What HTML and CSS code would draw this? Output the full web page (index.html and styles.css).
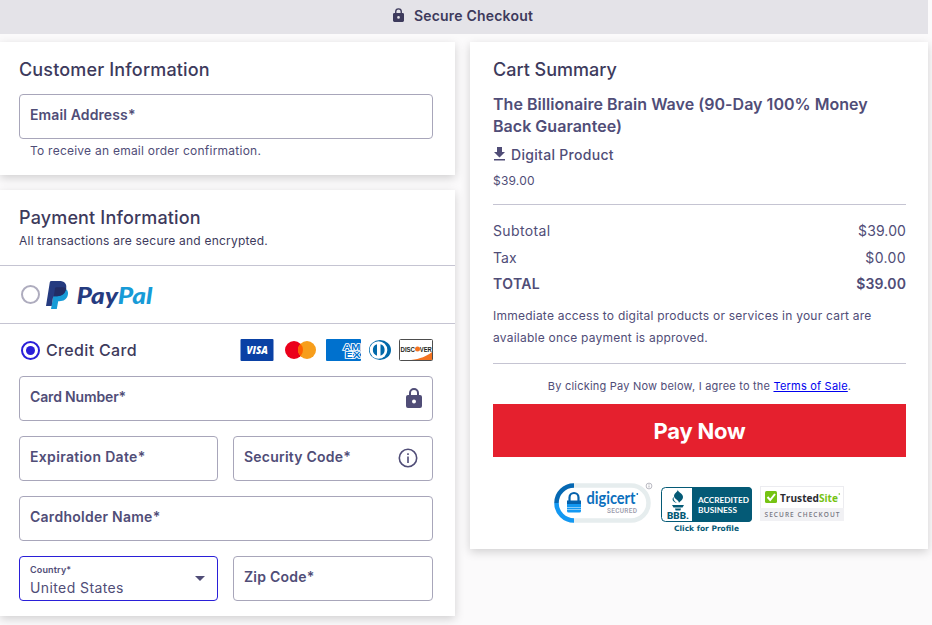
FILE: index.html
```html
<!DOCTYPE html>
<html lang="en">
<head>
<meta charset="utf-8">
<title>Secure Checkout</title>
<link rel="stylesheet" href="styles.css">
</head>
<body>
<header class="topbar">
  <svg class="topbar-lock" width="11" height="14" viewBox="0 0 16 20"><path fill="currentColor" fill-rule="evenodd" d="M2 7h1V5a5 5 0 0 1 10 0v2h1a2 2 0 0 1 2 2v9a2 2 0 0 1-2 2H2a2 2 0 0 1-2-2V9a2 2 0 0 1 2-2zm3 0h6V5a3 3 0 0 0-6 0zm3 4.500a2 2 0 1 0 0 4a2 2 0 0 0 0-4z"/></svg>
  <span class="topbar-title">Secure Checkout</span>
</header>
<main class="columns">
  <div class="left">
    <section class="card customer">
      <h2>Customer Information</h2>
      <div class="field email">Email Address*</div>
      <p class="help">To receive an email order confirmation.</p>
    </section>
    <section class="card payment">
      <div class="payment-head">
        <h2>Payment Information</h2>
        <p class="sub">All transactions are secure and encrypted.</p>
      </div>
      <div class="method paypal">
        <span class="radio"></span>
        <svg class="pp" width="108" height="29" viewBox="0 0 108 29">
          <path fill="#179bd7" d="M20 8c2 1.500 2.500 4 1.700 6.500-1.200 4-4 5.700-8.200 5.700h-1.300L10.800 28H5l3-17z"/>
          <path fill="#253b80" d="M3.800 1.300Q4 0 5.500 0H13c5.500 0 8 2.600 7.200 7.500-.9 5-4 7.700-9.200 7.700H8.500Q7.300 15.200 7 16.500L5.700 25H0z"/>
          <path fill="#222d65" d="M9 7.500Q9.200 6.300 10.500 6.300h6.200c1.400 0 2.600.3 3.500 1-.8 5-4 7.900-9.200 7.900H7.800z"/>
          <text class="pp-text" x="30.500" y="23" textLength="76" lengthAdjust="spacingAndGlyphs" fill="#253b80">Pay<tspan fill="#179bd7">Pal</tspan></text>
        </svg>
      </div>
      <div class="method credit">
        <span class="radio on"></span>
        <span class="credit-label">Credit Card</span>
        <svg class="brands" width="193" height="22" viewBox="0 0 193 22">
          <rect x=".5" width="33" height="22" rx="1" fill="#0a41a5"/>
          <text class="visa" x="6.500" y="15" textLength="21.500" lengthAdjust="spacingAndGlyphs" fill="#fff">VISA</text>
          <circle cx="54" cy="11" r="9" fill="#eb001b"/><circle cx="67" cy="11" r="9" fill="#f79e1b"/>
          <path fill="#ff5f00" d="M60.500 4.800a9 9 0 0 1 0 12.400a9 9 0 0 1 0-12.400z"/>
          <rect x="86" width="35" height="22" rx="1" fill="#0071ce"/>
          <g class="amex" fill="#0071ce" stroke="#fff" stroke-width="1.700" paint-order="stroke"><text x="103" y="10.500" textLength="17.500" lengthAdjust="spacingAndGlyphs">AM</text><text x="105" y="19" textLength="15.500" lengthAdjust="spacingAndGlyphs">EX</text></g>
          <ellipse cx="140" cy="11" rx="11" ry="10" fill="#0069aa"/><circle cx="138.500" cy="11" r="8.800" fill="#fff"/>
          <path fill="#0069aa" d="M137 5.300a6 6 0 0 0 0 11.400zM140.500 5.300a6 6 0 0 1 0 11.400z"/>
          <rect x="159.500" y=".5" width="33" height="21" rx="1" fill="#fff" stroke="#4d4d4d"/>
          <path fill="#f47321" d="M192 13v8h-21c9-1 16-4 21-8z"/>
          <g class="disc" fill="#231f20"><text x="160.500" y="12.500" textLength="14.500" lengthAdjust="spacingAndGlyphs">DISC</text><text x="179.800" y="12.500" textLength="12" lengthAdjust="spacingAndGlyphs">VER</text></g><circle cx="177.500" cy="10" r="2.500" fill="#f47321"/>
        </svg>
      </div>
      <div class="form">
        <div class="field wide card-number">Card Number*
          <svg class="lock" width="16" height="20" viewBox="0 0 16 20"><path fill="currentColor" fill-rule="evenodd" d="M2 7h1V5a5 5 0 0 1 10 0v2h1a2 2 0 0 1 2 2v9a2 2 0 0 1-2 2H2a2 2 0 0 1-2-2V9a2 2 0 0 1 2-2zm3 0h6V5a3 3 0 0 0-6 0zm3 4.500a2 2 0 1 0 0 4a2 2 0 0 0 0-4z"/></svg></div>
        <div class="field expiry">Expiration Date*</div>
        <div class="field">Security Code*
          <svg class="info" width="20" height="20" viewBox="0 0 20 20"><circle cx="10" cy="10" r="8.700" fill="none" stroke="currentColor" stroke-width="1.600"/><path fill="currentColor" d="M9.200 8.500h1.600V15H9.200zM9.200 5.200h1.600V7H9.200z"/></svg></div>
        <div class="field wide holder">Cardholder Name*</div>
        <div class="field select">
          <span class="stack"><span class="mini">Country*</span><span class="value">United States</span></span>
          <svg class="caret" width="10" height="5" viewBox="0 0 10 5"><path fill="currentColor" d="M0 0h10L5 5z"/></svg>
        </div>
        <div class="field">Zip Code*</div>
      </div>
    </section>
  </div>
  <section class="card cart">
    <h2 class="cart-title">Cart Summary</h2>
    <h3>The Billionaire Brain Wave (90-Day 100% Money<br>Back Guarantee)</h3>
    <div class="digital"><svg width="11" height="14" viewBox="0 0 11 14"><path fill="currentColor" d="M3 0h5v5h3L5.500 10.500 0 5h3zM0 12h11v1.600H0z"/></svg><span>Digital Product</span></div>
    <div class="price">$39.00</div>
    <div class="totals">
      <div class="row"><span class="name">Subtotal</span><span>$39.00</span></div>
      <div class="row"><span>Tax</span><span class="name">$0.00</span></div>
      <div class="row total"><span class="name">TOTAL</span><span>$39.00</span></div>
    </div>
    <p class="access">Immediate access to digital products or services in your cart are<br>available once payment is approved.</p>
    <p class="terms">By clicking Pay Now below, I agree to the <a href="#">Terms of Sale</a>.</p>
    <button class="pay">Pay Now</button>
    <div class="badges">
      <svg width="99" height="42" viewBox="0 0 99 42">
        <rect x="2.500" y="3.500" width="92" height="35" rx="17.500" fill="#fff" stroke="#e6edee" stroke-width="4.500"/>
        <path d="M20 3.500a17.500 17.500 0 0 0-17.500 17.500" fill="none" stroke="#0568b3" stroke-width="4.500"/>
        <path d="M2.500 21A17.500 17.500 0 0 0 20 38.500" fill="none" stroke="#1398f2" stroke-width="4.500"/>
        <path d="M15.500 20v-4.500a4.500 4.500 0 0 1 9 0V20" fill="none" stroke="#0561ac" stroke-width="2.200"/>
        <path fill="#0561ac" d="M13 18.500h14v5H13z"/><path fill="#1398f2" d="M13 22h14v3H13zM13 25.500h14v2H13zM13 28h14v1a1.500 1.500 0 0 1-1.500 1.500h-11A1.500 1.500 0 0 1 13 29z"/>
        <text class="digi" x="32.500" y="22" textLength="49" lengthAdjust="spacingAndGlyphs" fill="#0b6fbd">digicert</text>
        <circle cx="83.300" cy="12" r=".9" fill="#0b6fbd"/>
        <text class="secured" x="53" y="30.500" textLength="30" lengthAdjust="spacing" fill="#9a9aaa">SECURED</text>
        <circle cx="95" cy="4" r="2.900" fill="#fff" stroke="#8c8c99" stroke-width=".6"/><path d="M95 3.500v2M95 2.300v.7" stroke="#8c8c99" stroke-width=".7"/>
      </svg>
      <svg class="bbb" width="92" height="50" viewBox="0 0 92 50">
        <rect x=".5" y=".5" width="90" height="34" rx="4" fill="#fff" stroke="#045a76"/>
        <path fill="#045a76" d="M31 0h56a4 4 0 0 1 4 4v27a4 4 0 0 1-4 4H31z"/>
        <path fill="#045a76" d="M17 2c-1 3 5 4 5 8 0 3-3 4-4 6 0-3-5-4-5-7s4-4 4-7zM13 10c-1 2 0 4 3 6-4-1-6-4-3-6zM11 18h12l-1.500 2.500h-9zM14 21.500h6l-.6 2h-4.800z"/>
        <text class="bbb-t" x="6" y="32" textLength="22" lengthAdjust="spacingAndGlyphs" fill="#045a76">BBB.</text>
        <g class="acc" fill="#fff"><text x="37" y="16" textLength="51" lengthAdjust="spacingAndGlyphs">ACCREDITED</text><text x="37" y="26" textLength="39" lengthAdjust="spacingAndGlyphs">BUSINESS</text></g>
        <text class="profile" x="13" y="44" textLength="65" lengthAdjust="spacingAndGlyphs" fill="#045a76">Click for Profile</text>
      </svg>
      <svg class="trust" width="84" height="35" viewBox="0 0 84 35">
        <rect x=".5" y=".5" width="83" height="34" fill="#fff" stroke="#ececf0"/><path fill="#f1f1f4" d="M0 22h84v13H0z"/>
        <rect x="5" y="5" width="12" height="12" rx="1.500" fill="#76c313"/><path d="M7.500 11l2.700 3L15 8" fill="none" stroke="#fff" stroke-width="2"/>
        <text class="ts" x="20" y="15.500" textLength="58" lengthAdjust="spacingAndGlyphs" fill="#2b2b33">Trusted<tspan fill="#76c313">Site</tspan></text><circle cx="79.300" cy="8" r=".8" fill="#76c313"/>
        <text class="sc" x="4.500" y="31" textLength="75" lengthAdjust="spacing" fill="#777782">SECURE CHECKOUT</text>
      </svg>
    </div>
  </section>
</main>
</body>
</html>
```
FILE: styles.css
```css
* { box-sizing: border-box; }
body { margin: 0; height: 625px; overflow: hidden; background: #fbfafb; color: #504d77; font-family: Inter, "Liberation Sans", sans-serif; font-size: 14px; }
h2, h3, p { margin: 0; }
.topbar { width: 928px; height: 34px; background: #e4e3e8; color: #3d3a5c; display: flex; align-items: center; justify-content: center; gap: 10px; padding: 0 2px 4px 0; font-weight: 600; letter-spacing: .2px; }
.columns { display: flex; align-items: flex-start; gap: 15px; padding-top: 8px; width: 928px; }
.left { width: 455px; display: flex; flex-direction: column; gap: 15px; }
.card { background: #fff; box-shadow: 0 3px 9px rgba(0,0,0,.17); }
h2 { font-size: 18px; line-height: 24px; font-weight: 500; color: #3d3a5c; letter-spacing: .16px; }
.cart-title { letter-spacing: 0; }
.customer { height: 133px; padding: 16px 22px 0 19px; }
.customer .field { margin-top: 12px; }
.field { height: 45px; border: 1px solid #a8a6ba; border-radius: 4px; padding: 0 10px 4px; display: flex; align-items: center; justify-content: space-between; font-weight: 600; letter-spacing: .22px; }
.email { letter-spacing: .12px; }
.card-number { letter-spacing: -.15px; }
.expiry { letter-spacing: .33px; }
.holder { letter-spacing: .26px; }
.help { font-size: 12px; line-height: 16px; margin: 4px 0 0 11px; letter-spacing: .24px; }
.payment { height: 426px; }
.payment-head { height: 76px; padding: 16px 19px 0; border-bottom: 1px solid #c5c4d2; }
.sub { font-size: 12px; line-height: 18px; margin-top: 2px; color: #3d3a5c; letter-spacing: .22px; }
.method { display: flex; align-items: center; padding: 0 22px 0 21px; }
.paypal { height: 58px; border-bottom: 1px solid #c5c4d2; }
.radio { width: 19px; height: 19px; border: 2px solid #aeacbe; border-radius: 50%; flex: none; display: grid; place-items: center; }
.radio.on { border-color: #2a1fd8; }
.radio.on::after { content: ""; width: 9px; height: 9px; border-radius: 50%; background: #2a1fd8; }
.pp { margin: 2px 0 0 6px; }
.pp-text { font: italic 900 22.5px Lato, sans-serif; }
.credit { height: 52px; }
.credit-label { margin-left: 6px; font-size: 16px; font-weight: 500; color: #3d3a5c; letter-spacing: .34px; }
.brands { margin-left: auto; }
.visa { font: italic 800 11px "Open Sans", sans-serif; }
.amex { font: 700 9.500px "Liberation Sans", sans-serif; }
.disc { font: 700 7px "Liberation Sans", sans-serif; }
.form { display: grid; grid-template-columns: 199px 200px; gap: 15px; padding: 0 19px; }
.wide { grid-column: 1 / -1; }
.lock { margin: 3px 0 0; }
.info { margin: 3px 4px 0 0; }
.select { border-color: #2a1fd8; padding-bottom: 0; }
.stack { display: flex; flex-direction: column; align-items: flex-start; padding-top: 3px; }
.mini { font-size: 9px; line-height: 14px; letter-spacing: .15px; }
.value { font-size: 14px; line-height: 21px; font-weight: 400; letter-spacing: .4px; }
.caret { margin-right: 2px; }
.cart { width: 458px; height: 507px; padding: 16px 22px 0 23px; }
h3 { font-size: 16px; line-height: 22px; font-weight: 600; margin-top: 11px; letter-spacing: .03px; }
.digital { display: flex; align-items: center; gap: 6px; height: 20px; margin: 7px 0 0 1px; font-weight: 500; letter-spacing: .3px; }
.price { font-size: 12px; line-height: 18px; margin-top: 8px; height: 33px; border-bottom: 1px solid #c5c4d2; letter-spacing: .2px; }
.totals { padding-top: 12px; }
.row { display: flex; justify-content: space-between; line-height: 27px; height: 27px; letter-spacing: .1px; }
.name { letter-spacing: .38px; }
.total { font-weight: 600; line-height: 26px; }
.access { font-size: 12px; line-height: 22px; margin-top: 7px; height: 59px; border-bottom: 1px solid #c5c4d2; letter-spacing: .23px; }
.terms { font-size: 11px; line-height: 16px; text-align: center; margin-top: 14px; letter-spacing: .21px; }
.terms a { color: #0000ee; }
.pay { display: block; width: 413px; height: 53px; margin-top: 10px; padding: 0; border: 0; background: #e5202e; color: #fff; font: 700 22px Inter, sans-serif; letter-spacing: -.2px; }
.badges { display: flex; margin: 25px 0 0 61px; }
.bbb { margin: 5px 0 0 8px; }
.trust { margin: 4px 0 0 7px; }
.digi { font: 700 17px Lato, sans-serif; }
.secured { font: 500 6.500px Roboto, sans-serif; }
.bbb-t { font: 900 9px Roboto, sans-serif; }
.acc { font: 700 8px Lato, sans-serif; }
.profile { font: 700 7.500px "DejaVu Sans", sans-serif; }
.ts { font: 700 11px "Open Sans", sans-serif; }
.sc { font: 600 6.500px "Open Sans", sans-serif; }
```
